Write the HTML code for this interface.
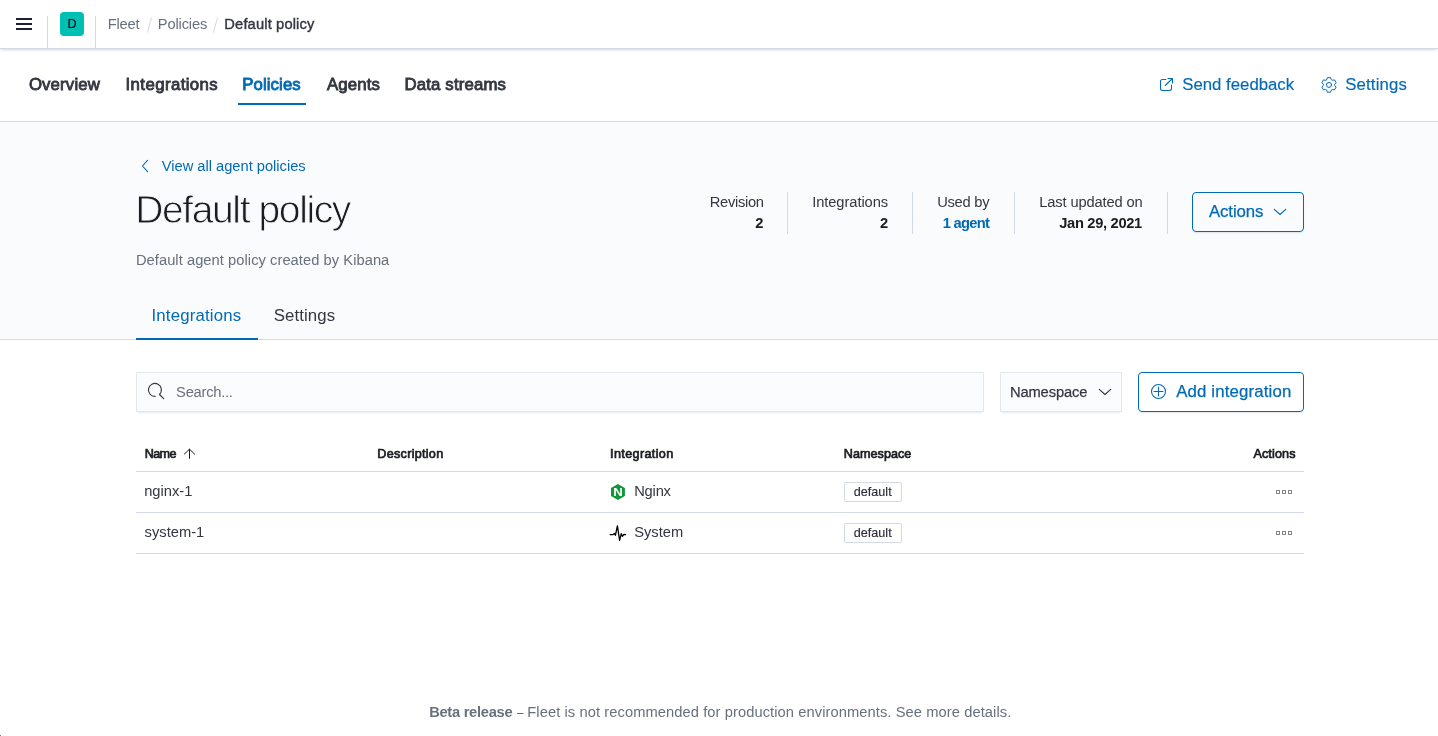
<!DOCTYPE html>
<html lang="en">
<head>
<meta charset="utf-8">
<title>Fleet - Default policy</title>
<style>
*{box-sizing:border-box;margin:0;padding:0}
html,body{width:1438px;height:736px;overflow:hidden;background:#fff}
body{font-family:"Liberation Sans",sans-serif;color:#343741;font-size:14px;position:relative}
.x{position:absolute;white-space:nowrap;font-weight:400;display:block}
.a{position:absolute}
#hdr{left:0;top:0;width:1438px;height:49px;background:#fff;border-bottom:1px solid #d3dae6;box-shadow:0 2px 2px -1px rgba(152,162,179,.3),0 1px 5px -2px rgba(152,162,179,.3)}
.vsep{top:16px;width:1px;height:32px;background:#d3dae6}
#avatar{left:60px;top:12px;width:24px;height:24px;border-radius:4px;background:#00bfb3}
.slash{top:17px;width:1px;height:16px;background:#d3dae6;transform:rotate(15deg)}
#nav{left:0;top:49px;width:1438px;height:73px;background:#fff;border-bottom:1px solid #d3dae6}
#tabline{left:238px;top:103px;width:68px;height:2px;background:#006bb4}
#hero{left:0;top:122px;width:1438px;height:218px;background:#fafbfd;border-bottom:1px solid #d3dae6}
#ptabline{left:136px;top:338px;width:122px;height:2px;background:#006bb4}
.ssep{top:192px;width:1px;height:42px;background:#d3dae6}
#actions{left:1192px;top:192px;width:112px;height:40px;border:1px solid #006bb4;border-radius:4px;box-shadow:0 2px 2px -1px rgba(152,162,179,.3)}
#search{left:136px;top:372px;width:848px;height:40px;background:#fbfcfd;border:1px solid #e3e7ef;border-radius:0;box-shadow:0 1px 1px -1px rgba(152,162,179,.2),0 3px 2px -2px rgba(152,162,179,.2)}
#ns{left:1000px;top:372px;width:122px;height:40px;background:#fbfcfd;border:1px solid #e3e7ef;border-radius:0;box-shadow:0 1px 1px -1px rgba(152,162,179,.2),0 3px 2px -2px rgba(152,162,179,.2)}
#add{left:1138px;top:372px;width:166px;height:40px;border:1px solid #006bb4;border-radius:4px;background:#fff;box-shadow:0 2px 2px -1px rgba(152,162,179,.3)}
.hr{left:136px;width:1168px;height:1px;background:#d3dae6}
.badge{left:844px;width:58px;height:20px;border:1px solid #d3dae6;border-radius:2px;background:#fff}
.dots{left:1276px;width:16px;height:4px}
.dots i{position:absolute;top:0;width:4px;height:4px;border:1px solid #848484}
#icons{left:0;top:0;width:1438px;height:736px;pointer-events:none;will-change:transform}
#txt{position:absolute;left:0;top:0;width:1438px;height:736px;will-change:transform}
</style>
</head>
<body>
<div class="a" id="nav"></div>
<div class="a" id="hdr"></div>
<div class="a vsep" style="left:47px"></div>
<div class="a" id="avatar"></div>
<div class="a vsep" style="left:95px"></div>
<div class="a slash" style="left:149px"></div>
<div class="a slash" style="left:215px"></div>
<div class="a" id="tabline"></div>
<div class="a" id="hero"></div>
<div class="a" id="ptabline"></div>
<div class="a ssep" style="left:787px"></div>
<div class="a ssep" style="left:912px"></div>
<div class="a ssep" style="left:1014px"></div>
<div class="a ssep" style="left:1167px"></div>
<div class="a" id="actions"></div>
<div class="a" id="search"></div>
<div class="a" id="ns"></div>
<div class="a" id="add"></div>
<div class="a hr" style="top:471px"></div>
<div class="a hr" style="top:512px"></div>
<div class="a hr" style="top:553px"></div>
<div class="a badge" style="top:482px"></div>
<div class="a badge" style="top:523px"></div>
<div class="a dots" style="top:490px"><i style="left:0"></i><i style="left:6px"></i><i style="left:12px"></i></div>
<div class="a dots" style="top:531px"><i style="left:0"></i><i style="left:6px"></i><i style="left:12px"></i></div>
<div class="a" style="left:0;top:735px;width:1px;height:1px;background:#777"></div>
<svg class="a" id="icons" width="1438" height="736" viewBox="0 0 1438 736" fill="none" stroke-linecap="round" stroke-linejoin="round">
  <!-- hamburger -->
  <g fill="#1e2030" stroke="none"><rect x="16" y="18" width="16" height="2"/><rect x="16" y="23" width="16" height="2"/><rect x="16" y="28" width="16" height="2"/></g>
  <!-- popout -->
  <g stroke="#006bb4" stroke-width="1.05"><path d="M1165.9 79.5H1162.5a2 2 0 0 0-2 2v7a2 2 0 0 0 2 2h7a2 2 0 0 0 2-2V85"/><path d="M1168 78.5h4.5V83M1172.5 78.5L1165.2 85.5"/></g>
  <!-- gear -->
  <g stroke="#006bb4" stroke-width="1"><path d="M1326.68 79.69 L1327.39 77.63 L1330.61 77.63 L1331.32 79.69 L1332.35 80.29 L1334.49 79.87 L1336.11 82.66 L1334.67 84.30 L1334.67 85.50 L1336.11 87.14 L1334.49 89.93 L1332.35 89.51 L1331.32 90.11 L1330.61 92.17 L1327.39 92.17 L1326.68 90.11 L1325.65 89.51 L1323.51 89.93 L1321.89 87.14 L1323.33 85.50 L1323.33 84.30 L1321.89 82.66 L1323.51 79.87 L1325.65 80.29Z"/><circle cx="1329" cy="84.9" r="2.5"/></g>
  <!-- back chevron -->
  <path d="M147.5 160.4L142.5 166L147.5 171.6" stroke="#006bb4" stroke-width="1.1"/>
  <!-- actions chevron -->
  <path d="M1274.3 209.3L1280 214.5L1285.7 209.3" stroke="#006bb4" stroke-width="1.1"/>
  <!-- ns chevron -->
  <path d="M1099.3 389.3L1105 394.5L1110.7 389.3" stroke="#343741" stroke-width="1.1"/>
  <!-- search -->
  <path d="M159.5 394.5A6.5 6.5 0 1 0 155.1 396.4M159.5 394.5L163.7 398.6" stroke="#343741" stroke-width="1.15"/>
  <!-- plus in circle -->
  <g stroke="#006bb4" stroke-width="1.1"><circle cx="1158.5" cy="391.5" r="7"/><path d="M1154 391.5h9M1158.5 387v9"/></g>
  <!-- sort arrow -->
  <path d="M189.5 458.4V449.4M184.4 454.1L189.5 449.2L194.6 454.1" stroke="#1a1c21" stroke-width="1"/>
  <!-- nginx -->
  <path d="M617.9 483.9L624.9 487.9V495.9L617.9 499.9L611 495.9V487.9Z" fill="#119639" stroke="none"/>
  <text transform="translate(617.95 495.85) scale(1.2 1)" x="0" y="0" text-anchor="middle" font-family="Liberation Sans, sans-serif" font-weight="700" font-size="11" fill="#fff" stroke="none">N</text>
  <!-- system -->
  <path d="M610.2 534.7H612.8L614.4 533.5L615.4 535.3L617.4 525.8L619.6 540.4L621.3 533.7L622.4 536.3L623.9 534.5L625.6 534.7" stroke="#000" stroke-width="1.3"/>
</svg>

<div id="txt">
<span class="x" id="bc1" style="left:107.84px;top:15.00px;font-size:14.7px;line-height:18px;color:#69707d;letter-spacing:-0.219px">Fleet</span>
<span class="x" id="bc2" style="left:157.77px;top:15.00px;font-size:14.7px;line-height:18px;color:#69707d;letter-spacing:-0.156px">Policies</span>
<span class="x" id="bc3" style="left:224.32px;top:15.00px;font-size:14.7px;line-height:18px;color:#343741;letter-spacing:0.145px;-webkit-text-stroke:0.4px #343741">Default policy</span>
<span class="x" id="av" style="left:67.55px;top:15.91px;font-size:12.6px;line-height:16px;color:#000;letter-spacing:0.000px;-webkit-text-stroke:0.15px #000">D</span>
<span class="x" id="t1" style="left:28.88px;top:74.21px;font-size:16.8px;line-height:21px;color:#343741;letter-spacing:0.149px;-webkit-text-stroke:0.85px #343741">Overview</span>
<span class="x" id="t2" style="left:125.53px;top:74.21px;font-size:16.8px;line-height:21px;color:#343741;letter-spacing:0.413px;-webkit-text-stroke:0.85px #343741">Integrations</span>
<span class="x" id="t3" style="left:242.26px;top:74.21px;font-size:16.8px;line-height:21px;color:#006bb4;letter-spacing:0.098px;-webkit-text-stroke:0.85px #006bb4">Policies</span>
<span class="x" id="t4" style="left:326.88px;top:74.21px;font-size:16.8px;line-height:21px;color:#343741;letter-spacing:0.142px;-webkit-text-stroke:0.85px #343741">Agents</span>
<span class="x" id="t5" style="left:404.45px;top:74.21px;font-size:16.8px;line-height:21px;color:#343741;letter-spacing:0.159px;-webkit-text-stroke:0.85px #343741">Data streams</span>
<span class="x" id="r1" style="left:1182.27px;top:73.91px;font-size:16.8px;line-height:21px;color:#006bb4;letter-spacing:-0.009px;-webkit-text-stroke:0.15px #006bb4">Send feedback</span>
<span class="x" id="r2" style="left:1345.27px;top:73.91px;font-size:16.8px;line-height:21px;color:#006bb4;letter-spacing:0.138px;-webkit-text-stroke:0.15px #006bb4">Settings</span>
<span class="x" id="back" style="left:161.75px;top:156.80px;font-size:14.7px;line-height:18px;color:#006bb4;letter-spacing:-0.016px">View all agent policies</span>
<h1 class="x" id="title" style="left:135.17px;top:184.80px;font-size:39px;line-height:49px;color:#1a1c21;letter-spacing:-1.377px;-webkit-text-stroke:0.85px #fafbfd">Default policy</h1>
<span class="x" id="desc" style="left:135.92px;top:250.80px;font-size:14.7px;line-height:18px;color:#69707d;letter-spacing:0.051px">Default agent policy created by Kibana</span>
<span class="x" id="p1" style="left:151.52px;top:304.91px;font-size:16.8px;line-height:21px;color:#006bb4;letter-spacing:0.168px">Integrations</span>
<span class="x" id="p2" style="left:273.80px;top:304.91px;font-size:16.8px;line-height:21px;color:#343741;letter-spacing:0.090px">Settings</span>
<span class="x" id="s1a" style="left:709.77px;top:193.11px;font-size:14.7px;line-height:18px;color:#343741;letter-spacing:-0.304px">Revision</span>
<span class="x" id="s1b" style="left:755.37px;top:213.80px;font-size:14.7px;line-height:18px;color:#1a1c21;letter-spacing:0.000px;font-weight:700">2</span>
<span class="x" id="s2a" style="left:812.15px;top:193.11px;font-size:14.7px;line-height:18px;color:#343741;letter-spacing:-0.067px">Integrations</span>
<span class="x" id="s2b" style="left:879.91px;top:213.80px;font-size:14.7px;line-height:18px;color:#1a1c21;letter-spacing:0.000px;font-weight:700">2</span>
<span class="x" id="s3a" style="left:937.14px;top:193.11px;font-size:14.7px;line-height:18px;color:#343741;letter-spacing:-0.227px">Used by</span>
<span class="x" id="s3b" style="left:942.87px;top:213.80px;font-size:14.7px;line-height:18px;color:#006bb4;letter-spacing:-0.745px;font-weight:700">1 agent</span>
<span class="x" id="s4a" style="left:1039.19px;top:193.11px;font-size:14.7px;line-height:18px;color:#343741;letter-spacing:-0.126px">Last updated on</span>
<span class="x" id="s4b" style="left:1059.22px;top:213.80px;font-size:14.7px;line-height:18px;color:#1a1c21;letter-spacing:-0.322px;font-weight:700">Jan 29, 2021</span>
<span class="x" id="act" style="left:1209.02px;top:200.71px;font-size:16.8px;line-height:21px;color:#006bb4;letter-spacing:-0.118px;-webkit-text-stroke:0.25px #006bb4">Actions</span>
<span class="x" id="srch" style="left:176.10px;top:382.71px;font-size:14.7px;line-height:18px;color:#69707d;letter-spacing:-0.246px">Search...</span>
<span class="x" id="nsl" style="left:1009.89px;top:382.71px;font-size:14.7px;line-height:18px;color:#343741;letter-spacing:-0.092px;-webkit-text-stroke:0.25px #343741">Namespace</span>
<span class="x" id="addl" style="left:1176.16px;top:380.91px;font-size:16.8px;line-height:21px;color:#006bb4;letter-spacing:0.155px;-webkit-text-stroke:0.25px #006bb4">Add integration</span>
<span class="x" id="h1" style="left:144.65px;top:445.91px;font-size:12.6px;line-height:16px;color:#1a1c21;letter-spacing:-0.571px;-webkit-text-stroke:0.7px #1a1c21">Name</span>
<span class="x" id="h2" style="left:377.34px;top:445.91px;font-size:12.6px;line-height:16px;color:#1a1c21;letter-spacing:0.284px;-webkit-text-stroke:0.7px #1a1c21">Description</span>
<span class="x" id="h3" style="left:610.11px;top:445.91px;font-size:12.6px;line-height:16px;color:#1a1c21;letter-spacing:0.353px;-webkit-text-stroke:0.7px #1a1c21">Integration</span>
<span class="x" id="h4" style="left:843.75px;top:445.91px;font-size:12.6px;line-height:16px;color:#1a1c21;letter-spacing:0.047px;-webkit-text-stroke:0.7px #1a1c21">Namespace</span>
<span class="x" id="h5" style="left:1253.40px;top:445.91px;font-size:12.6px;line-height:16px;color:#1a1c21;letter-spacing:0.133px;-webkit-text-stroke:0.7px #1a1c21">Actions</span>
<span class="x" id="n1" style="left:144.19px;top:482.01px;font-size:14.7px;line-height:18px;color:#343741;letter-spacing:-0.002px">nginx-1</span>
<span class="x" id="n2" style="left:144.56px;top:523.01px;font-size:14.7px;line-height:18px;color:#343741;letter-spacing:0.019px">system-1</span>
<span class="x" id="i1" style="left:634.18px;top:482.01px;font-size:14.7px;line-height:18px;color:#343741;letter-spacing:-0.193px">Nginx</span>
<span class="x" id="i2" style="left:634.15px;top:523.01px;font-size:14.7px;line-height:18px;color:#343741;letter-spacing:0.019px">System</span>
<span class="x" id="d1" style="left:853.72px;top:484.01px;font-size:12.6px;line-height:16px;color:#2b2d3b;letter-spacing:0.025px;-webkit-text-stroke:0.15px #2b2d3b">default</span>
<span class="x" id="d2" style="left:853.72px;top:525.01px;font-size:12.6px;line-height:16px;color:#2b2d3b;letter-spacing:0.025px;-webkit-text-stroke:0.15px #2b2d3b">default</span>
<span class="x" id="b1" style="left:429.17px;top:702.91px;font-size:14.7px;line-height:18px;color:#69707d;letter-spacing:-0.284px;font-weight:700">Beta release</span>
<span class="x" id="b2a" style="left:517.40px;top:702.90px;font-size:14.7px;line-height:18px;color:#69707d;letter-spacing:0.000px;transform:scaleX(0.8);transform-origin:0 50%">–</span>
<span class="x" id="b2" style="left:527.31px;top:702.91px;font-size:14.7px;line-height:18px;color:#69707d;letter-spacing:0.079px">Fleet is not recommended for production environments. See more details.</span>
</div>
</body>
</html>
